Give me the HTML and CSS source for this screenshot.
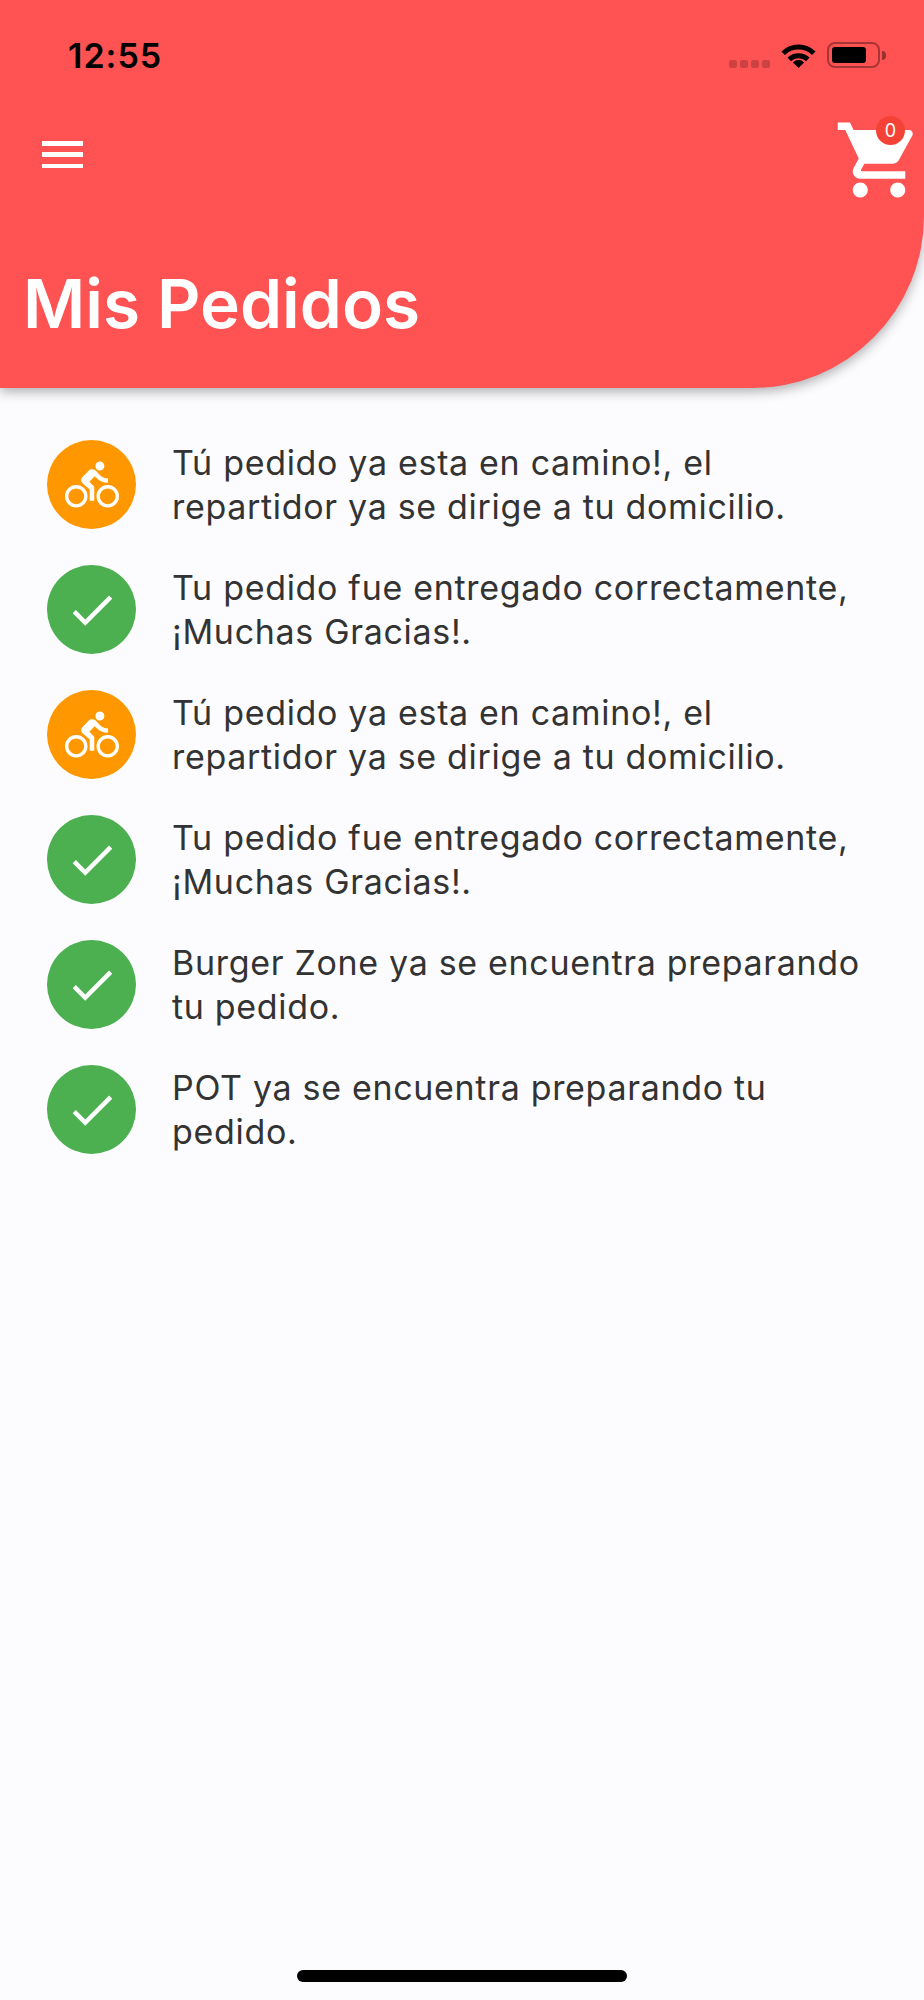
FILE: index.html
```html
<!DOCTYPE html>
<html lang="es">
<head>
    <meta charset="UTF-8" />
    <meta name="viewport" content="width=device-width, initial-scale=1.0"/>
    <title>Mis Pedidos</title>
    <link rel="stylesheet" href="styles.css">
</head>
<body>
    <!-- Red header: status bar, nav row and page title -->
    <header class="header">
        <div class="status-bar">
            <span class="time">12:55</span>
            <div class="status-icons">
                <div class="signal"><span></span><span></span><span></span><span></span></div>
                <svg class="wifi" viewBox="0 0 35 26" width="35" height="26">
                    <path d="M2.2 11.2a22 22 0 0 1 30.6 0" fill="none" stroke="#000" stroke-width="5"/>
                    <path d="M8.2 17.4a13.4 13.4 0 0 1 18.6 0" fill="none" stroke="#000" stroke-width="5"/>
                    <path d="M17.5 26l-5.6-5.6a8 8 0 0 1 11.2 0z"/>
                </svg>
                <div class="battery">
                    <div class="battery-body"><div class="battery-level"></div></div>
                    <div class="battery-nub"></div>
                </div>
            </div>
        </div>

        <div class="nav-row">
            <button class="menu-button" type="button" aria-label="Menu">
                <span></span><span></span><span></span>
            </button>
            <div class="cart">
                <svg viewBox="0 0 24 24" width="90" height="90" fill="#fff">
                    <path d="M7 18c-1.1 0-1.99.9-1.99 2S5.9 22 7 22s2-.9 2-2-.9-2-2-2zM1 2v2h2l3.6 7.59-1.35 2.45c-.16.28-.25.61-.25.96 0 1.1.9 2 2 2h12v-2H7.42c-.14 0-.25-.11-.25-.25l.03-.12.9-1.63h7.45c.75 0 1.41-.41 1.75-1.03l3.58-6.49c.08-.14.12-.31.12-.48 0-.55-.45-1-1-1H5.21l-.94-2H1zm16 16c-1.1 0-1.99.9-1.99 2s.89 2 1.99 2 2-.9 2-2-.9-2-2-2z"/>
                </svg>
                <span class="cart-badge">0</span>
            </div>
        </div>

        <h1 class="title">Mis Pedidos</h1>
    </header>

    <!-- Order notifications -->
    <main class="orders">
        <div class="order">
            <div class="order-icon orange">
                <svg viewBox="0 0 24 24" width="54" height="54" fill="#fff"><path d="M15.5 5.5c1.1 0 2-.9 2-2s-.9-2-2-2-2 .9-2 2 .9 2 2 2zM5 12c-2.8 0-5 2.2-5 5s2.2 5 5 5 5-2.2 5-5-2.2-5-5-5zm0 8.5c-1.9 0-3.5-1.6-3.5-3.5s1.6-3.5 3.5-3.5 3.5 1.6 3.5 3.5-1.6 3.5-3.5 3.5zm5.8-10l2.4-2.4.8.8c1.3 1.3 3 2.1 5.1 2.1V9c-1.5 0-2.7-.6-3.6-1.5l-1.9-1.9c-.5-.4-1-.6-1.6-.6s-1.1.2-1.4.6L7.8 8.4c-.4.4-.6.9-.6 1.4 0 .6.2 1.1.6 1.4L11 14v5h2v-6.2l-2.2-2.3zM19 12c-2.8 0-5 2.2-5 5s2.2 5 5 5 5-2.2 5-5-2.2-5-5-5zm0 8.5c-1.9 0-3.5-1.6-3.5-3.5s1.6-3.5 3.5-3.5 3.5 1.6 3.5 3.5-1.6 3.5-3.5 3.5z"/></svg>
            </div>
            <p>Tú pedido ya esta en camino!, el repartidor ya se dirige a tu domicilio.</p>
        </div>
        <div class="order">
            <div class="order-icon green">
                <svg viewBox="0 0 24 24" width="54" height="54" fill="#fff"><path d="M9 16.17L4.83 12l-1.42 1.41L9 19 21 7l-1.41-1.41z"/></svg>
            </div>
            <p>Tu pedido fue entregado correctamente, ¡Muchas Gracias!.</p>
        </div>
        <div class="order">
            <div class="order-icon orange">
                <svg viewBox="0 0 24 24" width="54" height="54" fill="#fff"><path d="M15.5 5.5c1.1 0 2-.9 2-2s-.9-2-2-2-2 .9-2 2 .9 2 2 2zM5 12c-2.8 0-5 2.2-5 5s2.2 5 5 5 5-2.2 5-5-2.2-5-5-5zm0 8.5c-1.9 0-3.5-1.6-3.5-3.5s1.6-3.5 3.5-3.5 3.5 1.6 3.5 3.5-1.6 3.5-3.5 3.5zm5.8-10l2.4-2.4.8.8c1.3 1.3 3 2.1 5.1 2.1V9c-1.5 0-2.7-.6-3.6-1.5l-1.9-1.9c-.5-.4-1-.6-1.6-.6s-1.1.2-1.4.6L7.8 8.4c-.4.4-.6.9-.6 1.4 0 .6.2 1.1.6 1.4L11 14v5h2v-6.2l-2.2-2.3zM19 12c-2.8 0-5 2.2-5 5s2.2 5 5 5 5-2.2 5-5-2.2-5-5-5zm0 8.5c-1.9 0-3.5-1.6-3.5-3.5s1.6-3.5 3.5-3.5 3.5 1.6 3.5 3.5-1.6 3.5-3.5 3.5z"/></svg>
            </div>
            <p>Tú pedido ya esta en camino!, el repartidor ya se dirige a tu domicilio.</p>
        </div>
        <div class="order">
            <div class="order-icon green">
                <svg viewBox="0 0 24 24" width="54" height="54" fill="#fff"><path d="M9 16.17L4.83 12l-1.42 1.41L9 19 21 7l-1.41-1.41z"/></svg>
            </div>
            <p>Tu pedido fue entregado correctamente, ¡Muchas Gracias!.</p>
        </div>
        <div class="order">
            <div class="order-icon green">
                <svg viewBox="0 0 24 24" width="54" height="54" fill="#fff"><path d="M9 16.17L4.83 12l-1.42 1.41L9 19 21 7l-1.41-1.41z"/></svg>
            </div>
            <p>Burger Zone ya se encuentra preparando tu pedido.</p>
        </div>
        <div class="order">
            <div class="order-icon green">
                <svg viewBox="0 0 24 24" width="54" height="54" fill="#fff"><path d="M9 16.17L4.83 12l-1.42 1.41L9 19 21 7l-1.41-1.41z"/></svg>
            </div>
            <p>POT ya se encuentra preparando tu pedido.</p>
        </div>
    </main>

    <div class="home-bar"></div>
</body>
</html>
```

FILE: styles.css
```css
* {
    box-sizing: border-box;
    margin: 0;
    padding: 0;
}

body {
    font-family: Inter, "Liberation Sans", sans-serif;
    background: #fcfcff;
    color: #333;
    display: flex;
    flex-direction: column;
    height: 2000px;
    overflow: hidden;
}

/* Header */
.header {
    height: 388px;
    flex-shrink: 0;
    background: #ff5252;
    border-bottom-right-radius: 172px;
    box-shadow: 0 4px 12px rgba(0, 0, 0, 0.3);
    display: flex;
    flex-direction: column;
}

.status-bar {
    height: 115px;
    padding: 40px 38px 0 68px;
    display: flex;
    justify-content: space-between;
    align-items: flex-start;
}

.time {
    font-size: 34px;
    font-weight: 600;
    line-height: 32px;
    letter-spacing: 1px;
    color: #000;
}

.status-icons {
    display: flex;
    align-items: flex-end;
    gap: 11px;
    margin-top: 2px;
}

.signal {
    display: flex;
    gap: 3px;
}

.signal span {
    width: 8px;
    height: 8px;
    border-radius: 2px;
    background: rgba(0, 0, 0, 0.2);
}

.battery {
    display: flex;
    align-items: center;
    gap: 2px;
}

.battery-body {
    width: 53px;
    height: 26px;
    padding: 3px;
    border: 2px solid rgba(0, 0, 0, 0.35);
    border-radius: 8px;
}

.battery-level {
    width: 34px;
    height: 100%;
    border-radius: 3px;
    background: #000;
}

.battery-nub {
    width: 4px;
    height: 9px;
    border-radius: 0 4px 4px 0;
    background: rgba(0, 0, 0, 0.4);
}

.nav-row {
    display: flex;
    justify-content: space-between;
    align-items: flex-start;
    padding-left: 42px;
    height: 90px;
}

.menu-button {
    width: 41px;
    height: 27px;
    margin-top: 26px;
    border: none;
    background: none;
    display: flex;
    flex-direction: column;
    justify-content: space-between;
}

.menu-button span {
    display: block;
    height: 4.5px;
    background: #fff;
}

.cart {
    position: relative;
    width: 90px;
    height: 90px;
}

.cart-badge {
    position: absolute;
    top: 1px;
    left: 42px;
    width: 29px;
    height: 29px;
    border-radius: 50%;
    background: #f44336;
    color: #fff;
    font-size: 18px;
    line-height: 29px;
    text-align: center;
}

.title {
    font-size: 67.5px;
    font-weight: 600;
    line-height: 80px;
    color: #fff;
    margin-top: 59px;
    padding-left: 23px;
}

/* Order list */
.orders {
    flex: 1;
    padding: 52px 44px 0 47px;
    display: flex;
    flex-direction: column;
    gap: 36px;
}

.order {
    display: flex;
    align-items: center;
    gap: 36px;
}

.order p {
    font-size: 34px;
    line-height: 44px;
    letter-spacing: 0.68px;
}

.order-icon {
    width: 89px;
    height: 89px;
    flex-shrink: 0;
    border-radius: 50%;
    display: flex;
    align-items: center;
    justify-content: center;
}

.orange {
    background: #ff9800;
}

.green {
    background: #4caf50;
}

.home-bar {
    width: 330px;
    height: 12px;
    flex-shrink: 0;
    margin: 0 auto 18px;
    border-radius: 6px;
    background: #000;
}
```
